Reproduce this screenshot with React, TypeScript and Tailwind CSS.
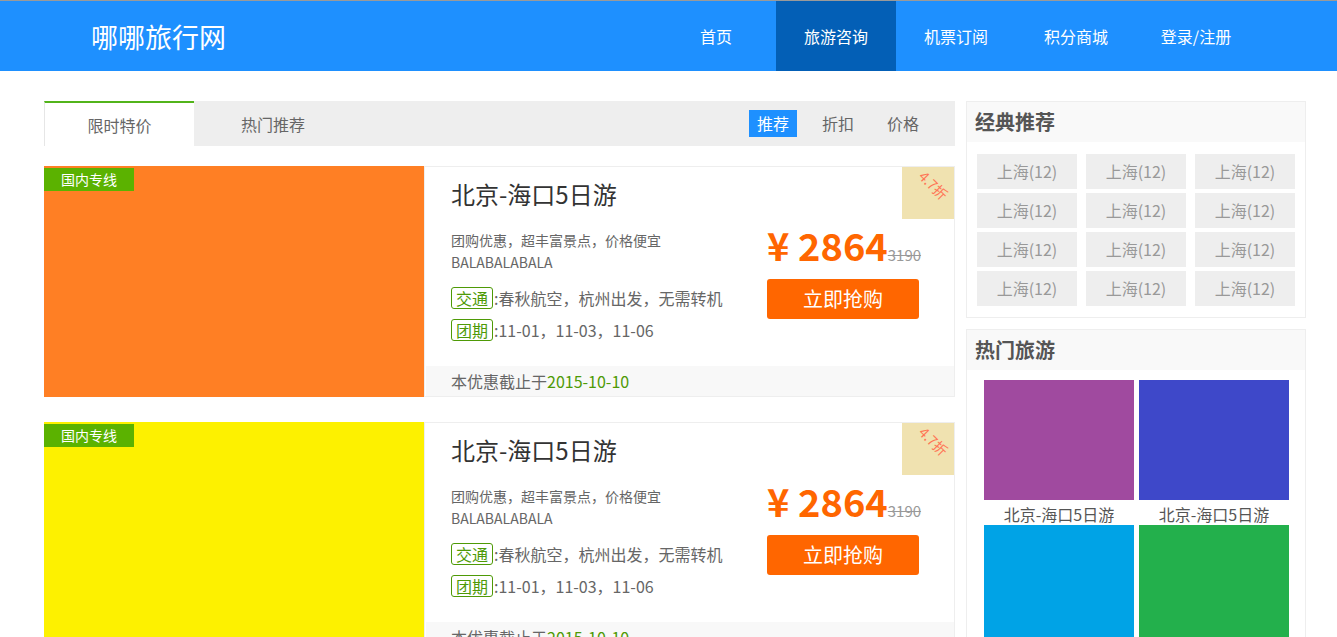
import React from "react";

const FONT = { fontFamily: '"Noto Sans CJK SC", "Noto Sans", sans-serif' };

const NAV = ["首页", "旅游咨询", "机票订阅", "积分商城", "登录/注册"];

const DEALS = [{ color: "bg-[#ff7f24]" }, { color: "bg-[#fdf100]" }];

const HOT = [
  { color: "bg-[#a04a9f]", name: "北京-海口5日游" },
  { color: "bg-[#3e48c9]", name: "北京-海口5日游" },
  { color: "bg-[#00a3e6]", name: "北京-海口5日游" },
  { color: "bg-[#23b04c]", name: "北京-海口5日游" },
];

function Header() {
  return (
    <header className="border-t border-[#9a9a9a] bg-[#1e90ff]">
      <div className="flex h-[70px] items-center">
        <div className="ml-[91px] text-[27px] leading-none text-white">哪哪旅行网</div>
        <nav className="ml-auto mr-[81px] flex h-full">
          {NAV.map((item, i) => (
            <a
              key={item}
              className={`flex h-full w-[120px] items-center justify-center text-[16px] text-white ${
                i === 1 ? "bg-[#035fb6]" : ""
              }`}
            >
              {item}
            </a>
          ))}
        </nav>
      </div>
    </header>
  );
}

function Tabs() {
  return (
    <div className="flex h-[45px] items-stretch bg-[#eeeeee] text-[16px] text-[#666]">
      <div className="flex w-[150px] items-center justify-center border-t-2 border-l border-t-[#52b41a] border-l-[#e6e6e6] bg-white">
        限时特价
      </div>
      <div className="flex w-[158px] items-center justify-center">热门推荐</div>
      <div className="ml-auto flex items-center gap-[17px] pr-[28px]">
        <span className="bg-[#1e90ff] px-2 leading-[27px] text-white">推荐</span>
        <span className="px-2 leading-[27px]">折扣</span>
        <span className="px-2 leading-[27px]">价格</span>
      </div>
    </div>
  );
}

function InfoRow({ tag, text }: { tag: string; text: string }) {
  return (
    <div className="flex h-[32px] items-center">
      <span className="mr-px rounded-[3px] border border-[#4e9a06] px-[4px] text-[16px] leading-[20px] text-[#4e9a06]">
        {tag}
      </span>
      <span>{text}</span>
    </div>
  );
}

function DealCard({ color }: { color: string }) {
  return (
    <div className="flex h-[231px]">
      <div className={`relative w-[380px] shrink-0 ${color}`}>
        <span className="absolute left-0 top-[2px] w-[90px] bg-[#5bb200] text-center text-[14px] leading-[23px] text-white">
          国内专线
        </span>
      </div>
      <div className="relative flex flex-1 flex-col border border-[#eeeeee]">
        <div className="absolute right-0 top-0 h-[52px] w-[52px] overflow-hidden bg-[#f0e2b0]">
          <span className="absolute left-[15px] top-[11px] rotate-45 whitespace-nowrap text-[14px] leading-none text-[#ff7555]">
            4.7折
          </span>
        </div>
        <div className="flex flex-1">
          <div className="flex-1 pl-[26px] pt-[11px]">
            <div className="text-[24px] leading-[32px] text-[#333]">北京-海口5日游</div>
            <div className="mt-[19px] text-[14px] leading-[22px] text-[#666]">
              团购优惠，超丰富景点，价格便宜
              <br />
              BALABALABALA
            </div>
            <div className="mt-[9px] text-[16px] text-[#666]">
              <InfoRow tag="交通" text=":春秋航空，杭州出发，无需转机" />
              <InfoRow tag="团期" text=":11-01，11-03，11-06" />
            </div>
          </div>
          <div className="mr-[35px] w-[152px] pt-[54px]">
            <div className="flex h-[48px] items-baseline whitespace-nowrap">
              <span className="text-[38px] font-bold leading-[48px] text-[#ff6600]">¥ 2864</span>
              <span className="text-[15px] leading-none text-[#999] line-through">3190</span>
            </div>
            <button className="mt-[10px] h-[40px] w-[152px] rounded-[3px] bg-[#ff6600] text-[20px] text-white">
              立即抢购
            </button>
          </div>
        </div>
        <div className="ml-px h-[30px] bg-[#f8f8f8] pl-[25px] text-[16px] leading-[30px] text-[#666]">
          本优惠截止于<span className="text-[#4e9a06]">2015-10-10</span>
        </div>
      </div>
    </div>
  );
}

function Box({ title, children }: { title: string; children: React.ReactNode }) {
  return (
    <div className="border border-[#eeeeee]">
      <div className="h-[40px] bg-[#f9f9f9] pl-[8px] text-[20px] font-bold leading-[40px] text-[#555]">{title}</div>
      {children}
    </div>
  );
}

export default function App() {
  return (
    <div className="min-h-screen bg-white" style={FONT}>
      <Header />
      <div className="ml-[44px] mt-[30px] flex gap-[11px]">
        <div className="w-[911px]">
          <Tabs />
          <div className="mt-[20px] flex flex-col gap-[25px]">
            {DEALS.map((d, i) => (
              <DealCard key={i} color={d.color} />
            ))}
          </div>
        </div>
        <div className="flex w-[340px] flex-col gap-[11px]">
          <Box title="经典推荐">
            <div className="grid grid-cols-[100px_100px_100px] gap-x-[9px] gap-y-[4px] px-[10px] pb-[11px] pt-[12px]">
              {Array.from({ length: 12 }).map((_, i) => (
                <div key={i} className="h-[35px] bg-[#eeeeee] text-center text-[16px] leading-[35px] text-[#999]">
                  上海(12)
                </div>
              ))}
            </div>
          </Box>
          <Box title="热门旅游">
            <div className="grid grid-cols-[150px_150px] gap-x-[5px] pl-[17px] pt-[10px]">
              {HOT.map((h, i) => (
                <div key={i}>
                  <div className={`h-[120px] ${h.color}`} />
                  <div className="h-[25px] pt-[4px] text-center text-[16px] leading-[21px] text-[#555]">{h.name}</div>
                </div>
              ))}
            </div>
          </Box>
        </div>
      </div>
    </div>
  );
}
